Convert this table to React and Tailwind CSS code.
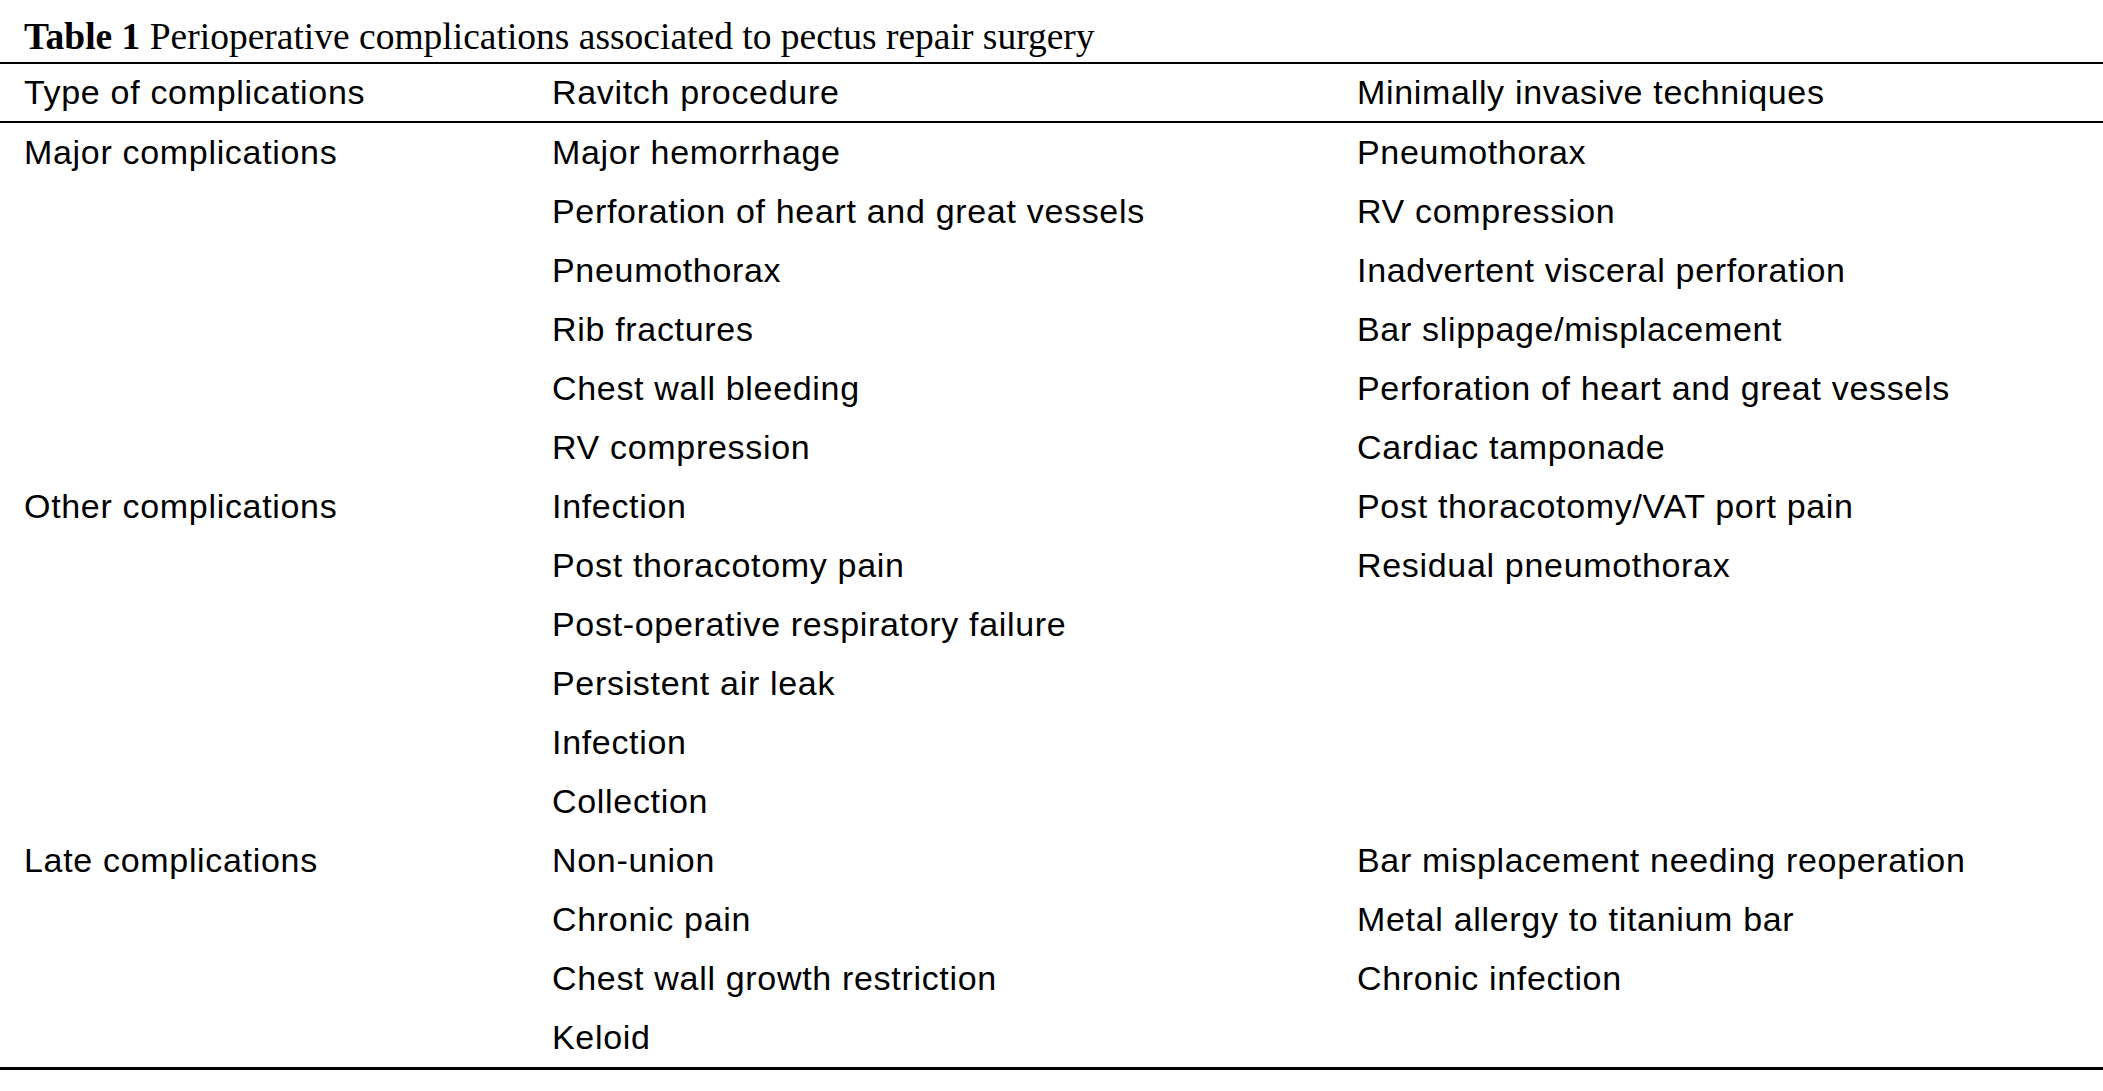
import React from "react";

const groups = [
  {
    type: "Major complications",
    ravitch: [
      "Major hemorrhage",
      "Perforation of heart and great vessels",
      "Pneumothorax",
      "Rib fractures",
      "Chest wall bleeding",
      "RV compression",
    ],
    minimal: [
      "Pneumothorax",
      "RV compression",
      "Inadvertent visceral perforation",
      "Bar slippage/misplacement",
      "Perforation of heart and great vessels",
      "Cardiac tamponade",
    ],
  },
  {
    type: "Other complications",
    ravitch: [
      "Infection",
      "Post thoracotomy pain",
      "Post-operative respiratory failure",
      "Persistent air leak",
      "Infection",
      "Collection",
    ],
    minimal: ["Post thoracotomy/VAT port pain", "Residual pneumothorax"],
  },
  {
    type: "Late complications",
    ravitch: [
      "Non-union",
      "Chronic pain",
      "Chest wall growth restriction",
      "Keloid",
    ],
    minimal: [
      "Bar misplacement needing reoperation",
      "Metal allergy to titanium bar",
      "Chronic infection",
    ],
  },
];

// flatten groups into one line per row
const rows = groups.flatMap((g) => {
  const n = Math.max(g.ravitch.length, g.minimal.length);
  return Array.from({ length: n }, (_, i) => ({
    type: i === 0 ? g.type : "",
    ravitch: g.ravitch[i] || "",
    minimal: g.minimal[i] || "",
  }));
});

const Row = ({ cells, className }) => (
  <div
    className={`grid grid-cols-[528px_805px_1fr] pl-[24px] items-center ${className}`}
  >
    {cells.map((c, i) => (
      <div key={i} className="whitespace-nowrap">
        {c}
      </div>
    ))}
  </div>
);

export default function App() {
  return (
    <div className="w-[2103px] min-h-[1091px] bg-white text-black">
      <div className="h-[62px] pt-[12px] pl-[24px] leading-[50px] text-[37.5px] font-['Liberation_Serif',serif]">
        <span className="font-bold">Table 1</span> Perioperative complications
        associated to pectus repair surgery
      </div>

      <div className="border-t-2 border-b-[3px] border-black font-['Liberation_Sans',Arial,sans-serif] text-[34px] tracking-[0.02em]">
        <Row
          className="h-[59px] border-b-2 border-black"
          cells={[
            "Type of complications",
            "Ravitch procedure",
            "Minimally invasive techniques",
          ]}
        />
        {rows.map((r, i) => (
          <Row
            key={i}
            className="h-[59px] leading-[59px]"
            cells={[r.type, r.ravitch, r.minimal]}
          />
        ))}
      </div>
    </div>
  );
}
